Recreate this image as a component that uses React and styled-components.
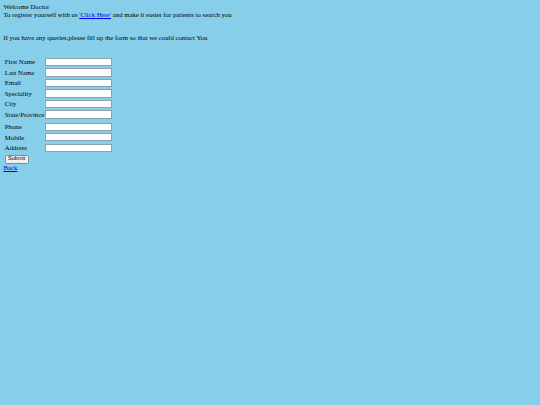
import React from 'react'
import styled, { createGlobalStyle } from 'styled-components'

const GlobalStyle = createGlobalStyle`
  html, body {
    margin: 0;
    padding: 0;
    background: #87ceeb;
  }
  body {
    min-height: 100vh;
    font-family: "Liberation Serif", "Times New Roman", serif;
    color: #000;
  }
`

const Page = styled.div`
  padding: 3.2px 3.4px;
  font-size: 6.75px;
  line-height: 7.7px;
`

const Intro = styled.p`
  margin: 0;
`

const Link = styled.a`
  color: #0000ee;
  text-decoration: underline;
  cursor: pointer;
`

const Form = styled.form`
  display: grid;
  grid-template-columns: 41.6px 67px;
  row-gap: 2.3px;
  align-items: center;
  margin-top: 16.2px;
`

const Label = styled.label`
  padding-left: 1.4px;
  margin-top: ${(p) => (p.$spaced ? '2px' : '0')};
  white-space: nowrap;
`

const Field = styled.input`
  box-sizing: border-box;
  width: 67px;
  height: 8.2px;
  margin: 0;
  margin-top: ${(p) => (p.$spaced ? '2px' : '0')};
  padding: 0 1px;
  border: 0.8px solid #8aa3ae;
  border-radius: 0;
  background: #fff;
  font-family: "Liberation Sans", Arial, sans-serif;
  font-size: 5.6px;
  outline: none;
`

const SubmitRow = styled.div`
  grid-column: 1 / span 2;
  padding-left: 1.3px;
`

const SubmitButton = styled.button`
  box-sizing: border-box;
  width: 24px;
  height: 9px;
  margin: 0;
  padding: 0;
  border: 0.8px solid #8a8a8a;
  border-radius: 1.3px;
  background: #efefef;
  font-family: "Liberation Sans", Arial, sans-serif;
  font-size: 5.6px;
  color: #000;
  line-height: 1;
`

const BackLink = styled(Link)`
  display: inline-block;
  margin-top: 0.8px;
`

const fields = [
  { id: 'firstName', label: 'First Name' },
  { id: 'lastName', label: 'Last Name' },
  { id: 'email', label: 'Email' },
  { id: 'speciality', label: 'Speciality' },
  { id: 'city', label: 'City' },
  { id: 'state', label: 'State/Province' },
  { id: 'phone', label: 'Phone', spaced: true },
  { id: 'mobile', label: 'Mobile' },
  { id: 'address', label: 'Address' },
]

export default function App() {
  function renderField(field) {
    return (
      <React.Fragment key={field.id}>
        <Label htmlFor={field.id} $spaced={field.spaced}>
          {field.label}
        </Label>
        <Field id={field.id} type="text" $spaced={field.spaced} />
      </React.Fragment>
    )
  }
  return (
    <>
      <GlobalStyle />
      <Page>
        <Intro>
          Welcome Doctor
          <br />
          To register yourself with us <Link href="#">'Click Here'</Link> and
          make it easier for patients to search you
          <br />
          <br />
          <br />
          If you have any queries,please fill up the form so that we could
          contact You
        </Intro>
        <Form onSubmit={(e) => e.preventDefault()}>
          {fields.map(renderField)}
          <SubmitRow>
            <SubmitButton type="submit">Submit</SubmitButton>
          </SubmitRow>
        </Form>
        <BackLink href="#">Back</BackLink>
      </Page>
    </>
  )
}
